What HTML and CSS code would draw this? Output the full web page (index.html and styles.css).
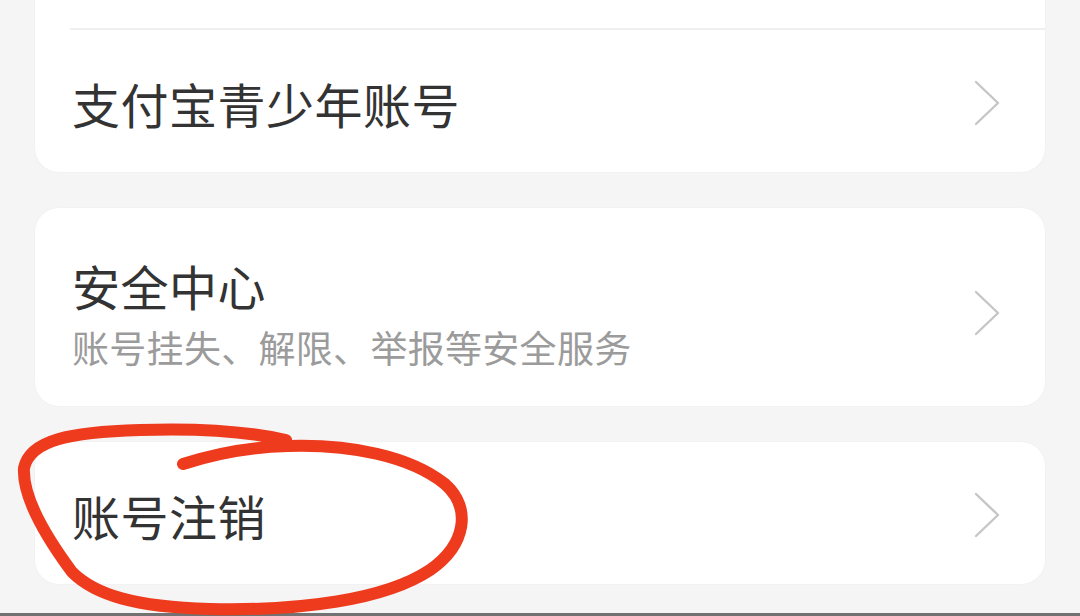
FILE: index.html
```html
<!DOCTYPE html>
<html lang="zh-CN">
<head>
    <meta charset="UTF-8">
    <meta name="viewport" content="width=device-width, initial-scale=1.0">
    <title>账号与安全</title>
    <link rel="stylesheet" href="styles.css">
</head>
<body>
    <div class="screen">
        <div class="settings-list">
            <!-- 上一组卡片，顶部已滚出屏幕 -->
            <div class="card card-cut">
                <div class="row-spacer"></div>
                <div class="divider"></div>
                <a href="#" class="row">
                    <span class="row-title">支付宝青少年账号</span>
                    <svg class="chevron" viewBox="0 0 26 46" fill="none" stroke="currentColor" stroke-width="2.4" stroke-linecap="round" stroke-linejoin="round">
                        <path d="M2 2l22 21L2 44"></path>
                    </svg>
                </a>
            </div>

            <div class="card">
                <a href="#" class="row row-double">
                    <span class="row-text">
                        <span class="row-title">安全中心</span>
                        <span class="row-desc">账号挂失、解限、举报等安全服务</span>
                    </span>
                    <svg class="chevron" viewBox="0 0 26 46" fill="none" stroke="currentColor" stroke-width="2.4" stroke-linecap="round" stroke-linejoin="round">
                        <path d="M2 2l22 21L2 44"></path>
                    </svg>
                </a>
            </div>

            <div class="card">
                <a href="#" class="row">
                    <span class="row-title">账号注销</span>
                    <svg class="chevron" viewBox="0 0 26 46" fill="none" stroke="currentColor" stroke-width="2.4" stroke-linecap="round" stroke-linejoin="round">
                        <path d="M2 2l22 21L2 44"></path>
                    </svg>
                </a>
            </div>
        </div>

        <div class="home-bar"></div>

        <!-- 手绘红圈标注 -->
        <svg class="markup" viewBox="0 0 1080 616" fill="none">
            <path d="M183 464 C220 452 252 447 288 446 C350 444 410 456 445 484 C472 508 466 545 430 570 C385 600 300 611 210 609 C135 607 95 595 72 572 C52 545 22 500 24 468 C30 440 70 432 140 430 C200 428 250 432 286 440"
                  stroke="#ee3a1d" stroke-width="12" stroke-linecap="round" stroke-linejoin="round"></path>
        </svg>
    </div>
</body>
</html>
```

FILE: styles.css
```css
* {
    box-sizing: border-box;
}

body {
    margin: 0;
    padding: 0;
    background-color: #f5f5f5;
    font-family: "Noto Sans CJK SC", "Noto Sans", sans-serif;
    color: #333;
    overflow: hidden;
}

.screen {
    position: relative;
    width: 1080px;
    height: 616px;
    display: flex;
    flex-direction: column;
}

.settings-list {
    display: flex;
    flex-direction: column;
    gap: 36px;
    padding: 0 35px;
}

.card {
    background-color: #fff;
    border-radius: 24px;
    box-shadow: 0 0 2px rgba(0, 0, 0, 0.05);
}

.card-cut {
    border-top-left-radius: 0;
    border-top-right-radius: 0;
}

.row-spacer {
    height: 28px;
}

.divider {
    height: 2px;
    margin-left: 35px;
    background-color: #efefef;
}

.row {
    display: flex;
    align-items: center;
    justify-content: space-between;
    height: 142px;
    padding: 4px 45px 0 37px;
    color: inherit;
    text-decoration: none;
}

.row-double {
    height: 198px;
    padding-top: 12px;
}

.row-text {
    display: flex;
    flex-direction: column;
    gap: 6px;
}

.row-title {
    font-size: 48px;
    line-height: 62px;
    color: #333;
    letter-spacing: 0.5px;
}

.row-desc {
    font-size: 37px;
    line-height: 50px;
    color: #9b9b9b;
    letter-spacing: 0.3px;
}

.chevron {
    width: 26px;
    height: 46px;
    color: #c6c6c6;
    flex-shrink: 0;
}

.home-bar {
    margin-top: auto;
    height: 3px;
    background-color: #727272;
}

.markup {
    position: absolute;
    left: 0;
    top: 0;
    width: 1080px;
    height: 616px;
    pointer-events: none;
}
```
